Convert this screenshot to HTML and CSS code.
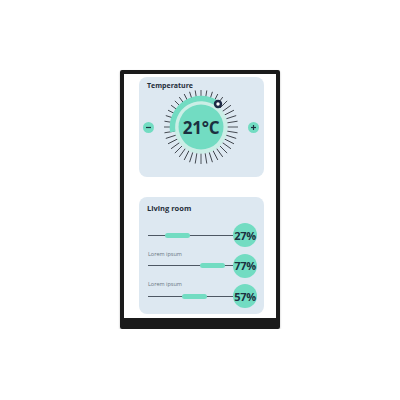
FILE: index.html
```html
<!DOCTYPE html>
<html>
<head>
<meta charset="utf-8">
<link rel="stylesheet" href="styles.css">
</head>
<body>
<div class="device">
  <div class="screen">
    <section class="card temp">
      <h2 class="title">Temperature</h2>
      <div class="dial-row">
        <span class="btn"><svg viewBox="0 0 11 11" width="11" height="11"><line x1="3" y1="5.5" x2="8" y2="5.5" stroke="#1f3342" stroke-width="1.2"/></svg></span>
        <div class="dial">
          <svg class="dial-svg" viewBox="0 0 80 80" width="80" height="80">
            <defs><line id="tk" x1="40" y1="3" x2="40" y2="14" stroke="#2a2f36" stroke-width="0.8"/></defs>
            <g>
              <use href="#tk" transform="rotate(0 40 40)"/><use href="#tk" transform="rotate(9 40 40)"/><use href="#tk" transform="rotate(18 40 40)"/><use href="#tk" transform="rotate(27 40 40)"/><use href="#tk" transform="rotate(36 40 40)"/><use href="#tk" transform="rotate(45 40 40)"/><use href="#tk" transform="rotate(54 40 40)"/><use href="#tk" transform="rotate(63 40 40)"/><use href="#tk" transform="rotate(72 40 40)"/><use href="#tk" transform="rotate(81 40 40)"/>
              <use href="#tk" transform="rotate(90 40 40)"/><use href="#tk" transform="rotate(99 40 40)"/><use href="#tk" transform="rotate(108 40 40)"/><use href="#tk" transform="rotate(117 40 40)"/><use href="#tk" transform="rotate(126 40 40)"/><use href="#tk" transform="rotate(135 40 40)"/><use href="#tk" transform="rotate(144 40 40)"/><use href="#tk" transform="rotate(153 40 40)"/><use href="#tk" transform="rotate(162 40 40)"/><use href="#tk" transform="rotate(171 40 40)"/>
              <use href="#tk" transform="rotate(180 40 40)"/><use href="#tk" transform="rotate(189 40 40)"/><use href="#tk" transform="rotate(198 40 40)"/><use href="#tk" transform="rotate(207 40 40)"/><use href="#tk" transform="rotate(216 40 40)"/><use href="#tk" transform="rotate(225 40 40)"/><use href="#tk" transform="rotate(234 40 40)"/><use href="#tk" transform="rotate(243 40 40)"/><use href="#tk" transform="rotate(252 40 40)"/><use href="#tk" transform="rotate(261 40 40)"/>
              <use href="#tk" transform="rotate(270 40 40)"/><use href="#tk" transform="rotate(279 40 40)"/><use href="#tk" transform="rotate(288 40 40)"/><use href="#tk" transform="rotate(297 40 40)"/><use href="#tk" transform="rotate(306 40 40)"/><use href="#tk" transform="rotate(315 40 40)"/><use href="#tk" transform="rotate(324 40 40)"/><use href="#tk" transform="rotate(333 40 40)"/><use href="#tk" transform="rotate(342 40 40)"/><use href="#tk" transform="rotate(351 40 40)"/>
            </g>
            <circle cx="40" cy="40" r="24.5" fill="none" stroke="#cbeee6" stroke-width="4.5"/>
            <path d="M11.8 44.9 A28.7 28.7 0 0 1 57 17" fill="none" stroke="#72dcc2" stroke-width="5.5"/>
            <circle cx="40" cy="40" r="22.5" fill="#72dcc2"/>
            <circle cx="57" cy="17" r="4.2" fill="#1d2a45"/>
            <circle cx="57" cy="17" r="1.7" fill="#ffffff"/>
          </svg>
          <span class="temp-val">21°C</span>
        </div>
        <span class="btn"><svg viewBox="0 0 11 11" width="11" height="11"><line x1="3" y1="5.5" x2="8" y2="5.5" stroke="#1f3342" stroke-width="1.2"/><line x1="5.5" y1="3" x2="5.5" y2="8" stroke="#1f3342" stroke-width="1.2"/></svg></span>
      </div>
    </section>
    <section class="card room">
      <h2 class="title room-title">Living room</h2>
      <div class="rows">
        <div class="row">
          <div class="col">
            <div class="track"><span class="thumb" style="left:17px"></span></div>
          </div>
          <span class="badge">27%</span>
        </div>
        <div class="row">
          <div class="col">
            <span class="label">Lorem ipsum</span>
            <div class="track"><span class="thumb" style="left:52px"></span></div>
          </div>
          <span class="badge">77%</span>
        </div>
        <div class="row">
          <div class="col">
            <span class="label">Lorem ipsum</span>
            <div class="track"><span class="thumb" style="left:34px"></span></div>
          </div>
          <span class="badge">57%</span>
        </div>
      </div>
    </section>
  </div>
</div>
</body>
</html>
```

FILE: styles.css
```css
* { box-sizing: border-box; }
html, body { margin: 0; padding: 0; background: #ffffff; }
body { font-family: "Open Sans", "Noto Sans", sans-serif; color: #1f3342; }

.device {
  width: 160px;
  margin: 70px auto 0;
  border: 4px solid #1b1b1b;
  border-bottom-width: 11px;
  border-radius: 2px;
  box-shadow: 0 1px 2px rgba(0,0,0,0.3);
}
.screen {
  height: 244px;
  background: #ffffff;
  padding: 3px 12px 4px 15px;
  display: flex;
  flex-direction: column;
  gap: 20px;
}
.card {
  background: #dde8f1;
  border-radius: 8px;
}
.temp { height: 100px; padding: 5px 0 0 8px; }
.room { height: 117px; padding: 7px 7px 0 8px; }

.title {
  margin: 0;
  font-size: 7px;
  line-height: 8px;
  font-weight: 700;
  color: #1f2d3a;
}
.room-title { font-size: 7.5px; line-height: 9px; }

.dial-row {
  margin: -3px 0 0 -8px;
  width: 125px;
  display: flex;
  align-items: center;
  justify-content: center;
  gap: 7px;
  padding-right: 1px;
}
.btn {
  width: 11px;
  height: 11px;
  border-radius: 50%;
  background: #72dcc2;
  display: flex;
}
.dial { position: relative; width: 80px; height: 80px; }
.dial-svg { display: block; }
.temp-val {
  position: absolute;
  left: 0; right: 0; top: 0; bottom: 0;
  display: flex;
  align-items: center;
  justify-content: center;
  font-size: 17px;
  font-weight: 700;
  letter-spacing: -0.3px;
  color: #1b3040;
}

.rows {
  margin-top: 10px;
  display: flex;
  flex-direction: column;
  gap: 2.5px;
}
.row {
  display: flex;
  align-items: flex-end;
}
.col {
  flex: 1;
  display: flex;
  flex-direction: column;
  padding-left: 1px;
}
.label {
  font-size: 5.5px;
  line-height: 8px;
  color: #6a7581;
  margin-bottom: -4px;
}
.track {
  position: relative;
  height: 24px;
}
.track::before {
  content: "";
  position: absolute;
  left: 0; right: 0;
  top: 11.5px;
  height: 1.2px;
  background: #4d5763;
}
.thumb {
  position: absolute;
  top: 9.5px;
  width: 25px;
  height: 5px;
  border-radius: 3px;
  background: #72dcc2;
}
.badge {
  width: 24px;
  height: 24px;
  border-radius: 50%;
  background: #72dcc2;
  display: flex;
  align-items: center;
  justify-content: center;
  font-size: 11px;
  font-weight: 700;
  letter-spacing: -0.3px;
  color: #1b3040;
  flex-shrink: 0;
}
```
